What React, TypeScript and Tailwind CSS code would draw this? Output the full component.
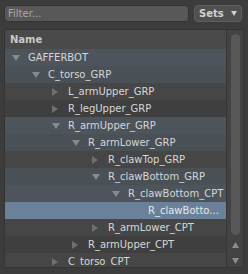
import React from "react";

type Row = {
  label: string;
  level: number;
  arrow: "down" | "right" | null;
  tint?: boolean;
  selected?: boolean;
};

const rows: Row[] = [
  { label: "GAFFERBOT", level: 0, arrow: "down", tint: true },
  { label: "C_torso_GRP", level: 1, arrow: "down", tint: true },
  { label: "L_armUpper_GRP", level: 2, arrow: "right" },
  { label: "R_legUpper_GRP", level: 2, arrow: "right" },
  { label: "R_armUpper_GRP", level: 2, arrow: "down", tint: true },
  { label: "R_armLower_GRP", level: 3, arrow: "down", tint: true },
  { label: "R_clawTop_GRP", level: 4, arrow: "right" },
  { label: "R_clawBottom_GRP", level: 4, arrow: "down", tint: true },
  { label: "R_clawBottom_CPT", level: 5, arrow: "down", tint: true },
  { label: "R_clawBotto...", level: 6, arrow: null, selected: true },
  { label: "R_armLower_CPT", level: 4, arrow: "right" },
  { label: "R_armUpper_CPT", level: 3, arrow: "right" },
  { label: "C_torso_CPT", level: 2, arrow: "right" },
];

const DownArrow = () => (
  <svg width="8" height="6" viewBox="0 0 8 6">
    <polygon points="0,0 8,0 4,6" fill="#8a8a8a" />
  </svg>
);

const RightArrow = () => (
  <svg width="6" height="8" viewBox="0 0 6 8">
    <polygon points="0,0 6,4 0,8" fill="#6f6f6f" />
  </svg>
);

const rowBg = (r: Row, i: number) => {
  if (r.selected) return "bg-[#6a8199]";
  if (r.tint) return i % 2 === 0 ? "bg-[#4d545b]" : "bg-[#495056]";
  return i % 2 === 0 ? "bg-[#464646]" : "bg-[#3f3f3f]";
};

const indent = [
  "pl-[7px]",
  "pl-[27px]",
  "pl-[47px]",
  "pl-[67px]",
  "pl-[87px]",
  "pl-[107px]",
  "pl-[127px]",
];

export default function App() {
  return (
    <div
      className="w-[248px] h-[274px] overflow-hidden bg-[#3c3c3c] text-[10px] text-[#d6d6d6]"
      style={{ fontFamily: '"DejaVu Sans", sans-serif' }}
    >
      {/* filter bar */}
      <div className="flex gap-[5px] px-[4px] pt-[5px]">
        <div className="w-[185px] h-[17px] rounded-[4px] border border-[#343434] bg-[#585858] flex items-center pl-[3px] text-[#a8a8a8]">
          Filter...
        </div>
        <div className="w-[48px] h-[17px] rounded-[4px] border border-[#5e5e5e] bg-[#505050] flex items-center pl-[4px] gap-[7px] font-bold text-[#d0d0d0]">
          Sets
          <svg width="6" height="5" viewBox="0 0 6 5">
            <polygon points="0,0 6,0 3,5" fill="#d0d0d0" />
          </svg>
        </div>
      </div>

      {/* tree panel */}
      <div className="mx-[4px] mt-[7px] h-[239px] flex border border-[#343434] bg-[#3f3f3f]">
        <div className="flex-1 flex flex-col overflow-hidden">
          <div className="h-[19px] shrink-0 bg-[#4a4a4a] flex items-center pl-[5px] font-bold text-[#c8c8c8]">
            Name
          </div>
          {rows.map((r, i) => (
            <div
              key={i}
              className={`h-[17px] shrink-0 flex items-center ${indent[r.level]} ${rowBg(r, i)} ${r.selected ? "text-[#e4e8ec]" : ""}`}
            >
              <div className="w-[16px] flex items-center">
                {r.arrow === "down" && <DownArrow />}
                {r.arrow === "right" && <RightArrow />}
              </div>
              <span className="whitespace-nowrap">{r.label}</span>
            </div>
          ))}
        </div>
        <div className="w-[17px] shrink-0 border-l border-[#363636] bg-[#434343] flex flex-col items-center pt-[4px] pb-[3px]">
          <div className="w-[9px] h-[203px] rounded-full bg-[#585858]" />
          <div className="mt-[7px] flex flex-col items-center gap-[10px]">
            <svg width="7" height="6" viewBox="0 0 7 6">
              <polygon points="3.5,0 7,6 0,6" fill="#8c8c8c" />
            </svg>
            <svg width="7" height="6" viewBox="0 0 7 6">
              <polygon points="0,0 7,0 3.5,6" fill="#8c8c8c" />
            </svg>
          </div>
        </div>
      </div>
    </div>
  );
}
